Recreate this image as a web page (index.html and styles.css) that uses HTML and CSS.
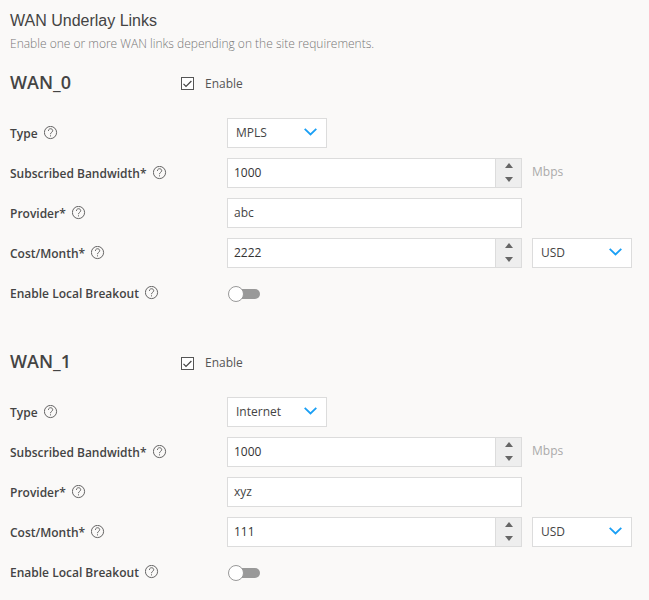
FILE: index.html
```html
<!DOCTYPE html>
<html lang="en">
<head>
<meta charset="utf-8">
<title>WAN Underlay Links</title>
<link rel="stylesheet" href="styles.css">
</head>
<body>
<svg class="defs" aria-hidden="true">
  <symbol id="help" viewBox="0 0 14 14"><circle cx="6.5" cy="6.5" r="6.1"/><path d="M4.4 4.9C4.4 2 8.7 2.1 8.7 4.7C8.7 6.3 6.5 6.3 6.5 8.2M6.5 9.3V10.4"/></symbol>
  <symbol id="chevron" viewBox="0 0 13 8"><path d="M.7.8 6.5 6.4 12.3.8"/></symbol>
  <symbol id="check" viewBox="0 0 13 13"><path d="M2.5 6.8 5 9.4 10.4 4"/></symbol>
</svg>
<h1 class="title">WAN Underlay Links</h1>
<p class="subtitle">Enable one or more WAN links depending on the site requirements.</p>

<section class="link">
  <div class="head"><h2 class="name">WAN_0</h2><span class="checkbox"><svg><use href="#check"/></svg></span><span class="enable">Enable</span></div>
  <div class="row"><div class="label"><span>Type</span><svg class="help"><use href="#help"/></svg></div><div class="select"><span>MPLS</span><svg class="chevron"><use href="#chevron"/></svg></div></div>
  <div class="row"><div class="label"><span>Subscribed Bandwidth*</span><svg class="help"><use href="#help"/></svg></div><div class="field number"><span>1000</span><div class="spinner"><i class="up"></i><i class="down"></i></div></div><span class="unit">Mbps</span></div>
  <div class="row"><div class="label"><span>Provider*</span><svg class="help"><use href="#help"/></svg></div><div class="field"><span>abc</span></div></div>
  <div class="row"><div class="label"><span>Cost/Month*</span><svg class="help"><use href="#help"/></svg></div><div class="field number"><span>2222</span><div class="spinner"><i class="up"></i><i class="down"></i></div></div><div class="select currency"><span>USD</span><svg class="chevron"><use href="#chevron"/></svg></div></div>
  <div class="row"><div class="label"><span>Enable Local Breakout</span><svg class="help"><use href="#help"/></svg></div><div class="toggle"><i class="knob"></i><i class="track"></i></div></div>
</section>

<section class="link">
  <div class="head"><h2 class="name">WAN_1</h2><span class="checkbox"><svg><use href="#check"/></svg></span><span class="enable">Enable</span></div>
  <div class="row"><div class="label"><span>Type</span><svg class="help"><use href="#help"/></svg></div><div class="select"><span>Internet</span><svg class="chevron"><use href="#chevron"/></svg></div></div>
  <div class="row"><div class="label"><span>Subscribed Bandwidth*</span><svg class="help"><use href="#help"/></svg></div><div class="field number"><span>1000</span><div class="spinner"><i class="up"></i><i class="down"></i></div></div><span class="unit">Mbps</span></div>
  <div class="row"><div class="label"><span>Provider*</span><svg class="help"><use href="#help"/></svg></div><div class="field"><span>xyz</span></div></div>
  <div class="row"><div class="label"><span>Cost/Month*</span><svg class="help"><use href="#help"/></svg></div><div class="field number"><span>111</span><div class="spinner"><i class="up"></i><i class="down"></i></div></div><div class="select currency"><span>USD</span><svg class="chevron"><use href="#chevron"/></svg></div></div>
  <div class="row"><div class="label"><span>Enable Local Breakout</span><svg class="help"><use href="#help"/></svg></div><div class="toggle"><i class="knob"></i><i class="track"></i></div></div>
</section>
</body>
</html>
```
FILE: styles.css
```css
* { box-sizing: border-box; }
body {
  margin: 0;
  padding: 11px 0 0 10px;
  height: 600px;
  overflow: hidden;
  background: #faf9f8;
  color: #444;
  font: 12px/18px "Open Sans", sans-serif;
}
svg { fill: none; display: block; }
.defs { display: none; }
.title {
  margin: 0;
  font: 16px/20px "Liberation Sans", Arial, sans-serif;
  color: #444;
}
.subtitle {
  margin: 3px 0 0;
  height: 19px;
  font-size: 12px;
  line-height: 19px;
  font-weight: 300;
  color: #777;
}
.link { margin-bottom: 19px; }
.head { display: flex; align-items: center; height: 60px; }
.name {
  width: 171px;
  margin: -2px 0 0;
  font-size: 18px;
  line-height: 24px;
  font-weight: 600;
}
.checkbox {
  width: 13px;
  height: 13px;
  margin-top: 1px;
  border: 1px solid #555;
  background: #fff;
}
.link + .link .checkbox { margin-top: 3px; }
.checkbox svg { width: 13px; height: 13px; margin: -1px; stroke: #444; stroke-width: 1.2; }
.enable { margin-left: 11px; margin-top: 1px; color: #555; }
.row { display: flex; align-items: center; height: 40px; }
.label { display: flex; align-items: center; width: 217px; font-weight: 600; }
.label span { margin-top: 2px; }
.help { width: 14px; height: 14px; margin: 0 0 0 6px; stroke: #555; stroke-width: .9; }
.field, .select {
  display: flex;
  align-items: center;
  height: 30px;
  border: 1px solid #dcdcdc;
  background: #fff;
}
.field { width: 295px; padding-left: 6px; justify-content: space-between; }
.field span, .select span { margin-top: -1px; }
.number { color: #333; }
.select { width: 100px; padding: 0 9px 0 8px; justify-content: space-between; }
.currency { margin-left: 10px; }
.chevron { width: 13px; height: 8px; margin-top: -2px; stroke: #1a9ff5; stroke-width: 1.8; }
.spinner {
  display: flex;
  flex-direction: column;
  justify-content: space-between;
  align-items: center;
  width: 26px;
  height: 28px;
  padding: 4px 0 5px;
  border-left: 1px solid #dcdcdc;
  background: #eee;
}
.up, .down { border: 4px solid transparent; border-top: 0; border-bottom: 5px solid #666; }
.down { border-top: 5px solid #666; border-bottom: 0; }
.unit { margin: -2px 0 0 10px; color: #aaa; }
.toggle { display: flex; align-items: center; margin: 2px 0 0 1px; }
.knob {
  width: 16px;
  height: 16px;
  border: 1px solid #999;
  border-radius: 50%;
  background: #fff;
  z-index: 1;
}
.track {
  width: 24px;
  height: 10px;
  margin-left: -8px;
  border-radius: 5px;
  background: #999;
}
```
